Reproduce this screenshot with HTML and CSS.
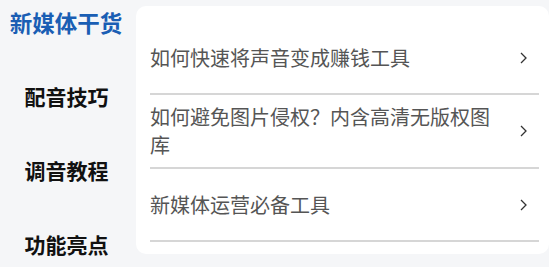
FILE: index.html
```html
<!DOCTYPE html>
<html lang="zh-CN">
<head>
<meta charset="utf-8">
<title>新媒体干货</title>
<link rel="stylesheet" href="styles.css">
</head>
<body>
<div class="page">
  <nav class="sidebar">
    <div class="nav-item active">新媒体干货</div>
    <div class="nav-item">配音技巧</div>
    <div class="nav-item">调音教程</div>
    <div class="nav-item">功能亮点</div>
  </nav>
  <main class="card">
    <div class="row">
      <span class="row-text">如何快速将声音变成赚钱工具</span>
      <svg class="chev" width="7" height="12" viewBox="0 0 7 12"><path d="M1 1 L6 6 L1 11" fill="none" stroke="#333" stroke-width="1.3"/></svg>
    </div>
    <div class="row">
      <span class="row-text">如何避免图片侵权？内含高清无版权图库</span>
      <svg class="chev" width="7" height="12" viewBox="0 0 7 12"><path d="M1 1 L6 6 L1 11" fill="none" stroke="#333" stroke-width="1.3"/></svg>
    </div>
    <div class="row">
      <span class="row-text">新媒体运营必备工具</span>
      <svg class="chev" width="7" height="12" viewBox="0 0 7 12"><path d="M1 1 L6 6 L1 11" fill="none" stroke="#333" stroke-width="1.3"/></svg>
    </div>
  </main>
</div>
</body>
</html>
```

FILE: styles.css
```css
* { box-sizing: border-box; }
html, body {
  margin: 0;
  padding: 0;
  background: #f5f6f8;
  font-family: "Noto Sans CJK SC", "Noto Sans", sans-serif;
}
.page {
  display: flex;
  align-items: flex-start;
  width: 549px;
  height: 267px;
  overflow: hidden;
}
.sidebar {
  width: 136px;
  flex: none;
  display: flex;
  flex-direction: column;
  margin-top: -15px;
}
.nav-item {
  height: 74px;
  display: flex;
  align-items: center;
  justify-content: center;
  font-size: 21px;
  font-weight: 700;
  color: #111;
  padding-right: 3px;
}
.nav-item.active {
  font-size: 22.5px;
  color: #1a5eb4;
  padding-right: 4px;
}
.card {
  flex: 1;
  margin-top: 6px;
  height: 248px;
  background: #fff;
  border-radius: 10px;
  padding: 16px 10px 11px 14px;
}
.row {
  display: flex;
  align-items: center;
  justify-content: space-between;
  min-height: 73px;
  padding: 8px 0;
  border-bottom: 2px solid #d6d6d6;
}
.row-text {
  font-size: 20px;
  line-height: 28px;
  color: #555;
  max-width: 350px;
}
.chev {
  flex: none;
  margin-right: 12px;
}
```
